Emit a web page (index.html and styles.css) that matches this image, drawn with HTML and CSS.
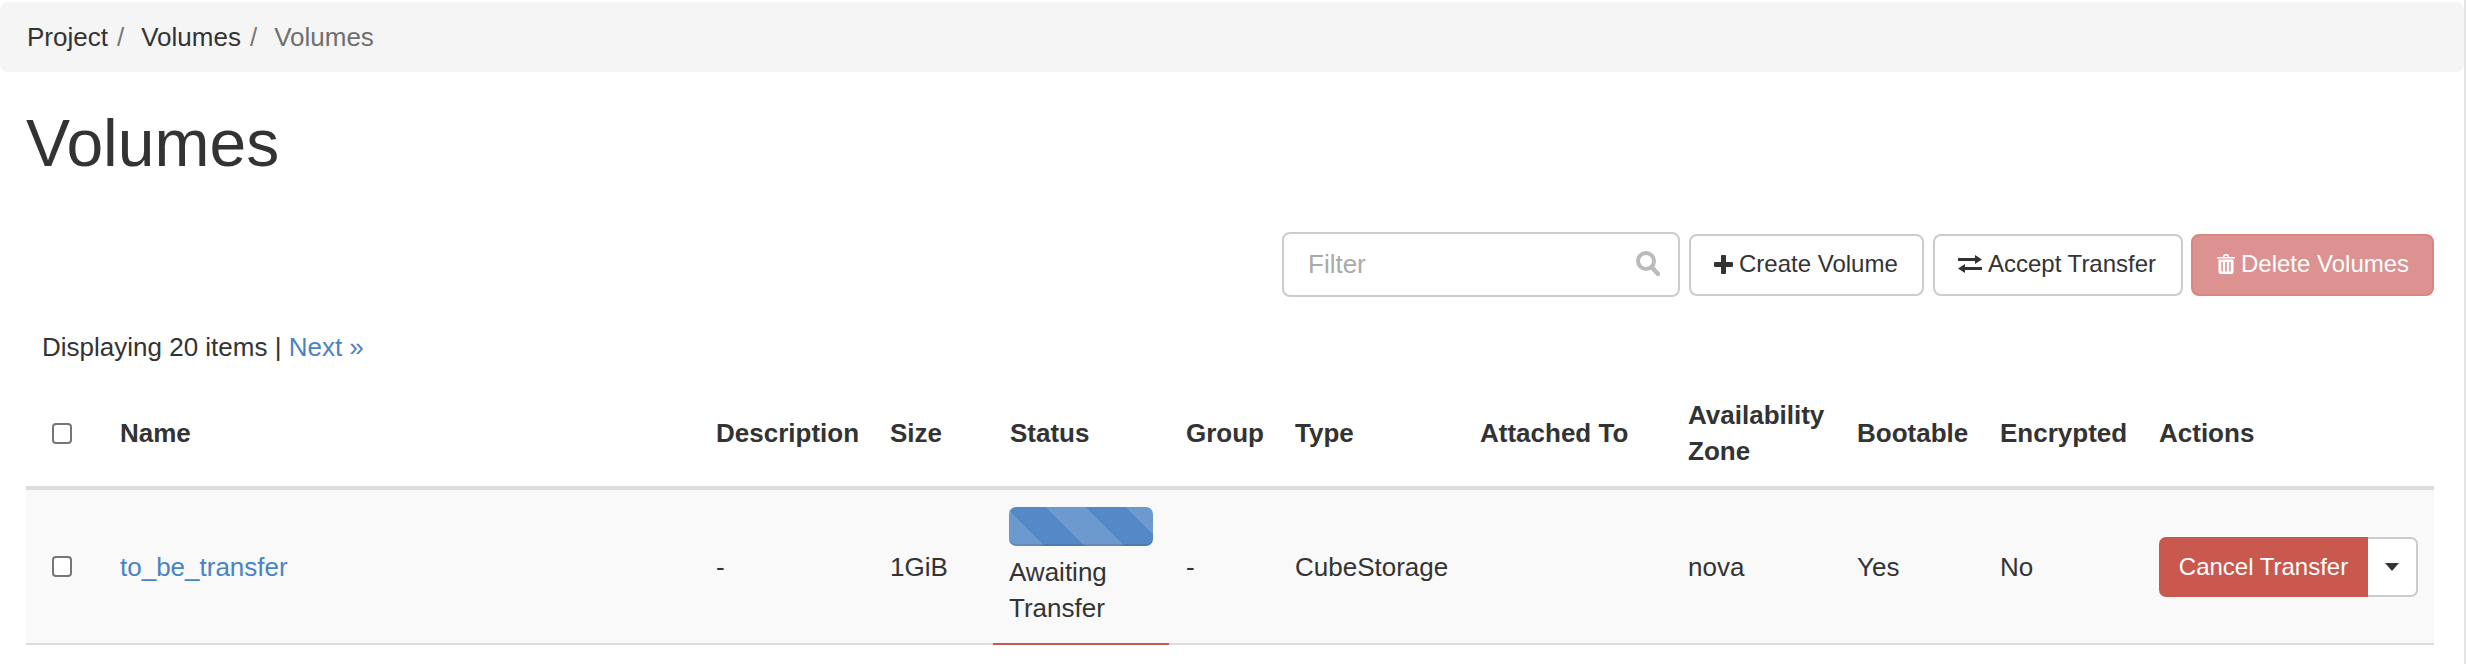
FILE: index.html
```html
<!DOCTYPE html>
<html lang="en">
<head>
<meta charset="utf-8">
<title>Volumes</title>
<link rel="stylesheet" href="styles.css">
</head>
<body>
<nav class="breadcrumb">
  <span class="crumb">Project</span><span class="sep">/</span>
  <span class="crumb">Volumes</span><span class="sep">/</span>
  <span class="crumb current">Volumes</span>
</nav>
<main class="content">
  <h1 class="page-title">Volumes</h1>
  <div class="toolbar">
    <div class="filter">
      <input class="filter-input" type="text" placeholder="Filter">
      <svg class="filter-icon" viewBox="0 0 24 25" aria-hidden="true"><circle cx="10" cy="10" r="8" fill="none" stroke="#bbb" stroke-width="4"/><path d="M16 16.500 22 23" stroke="#bbb" stroke-width="4.500" stroke-linecap="round"/></svg>
    </div>
    <button class="btn btn-create" type="button"><svg class="icon" viewBox="0 0 19 19" aria-hidden="true"><path d="M7 1a1 1 0 0 1 1-1h3a1 1 0 0 1 1 1v6h6a1 1 0 0 1 1 1v3a1 1 0 0 1-1 1h-6v6a1 1 0 0 1-1 1H8a1 1 0 0 1-1-1v-6H1a1 1 0 0 1-1-1V8a1 1 0 0 1 1-1h6z" fill="#333"/></svg>Create Volume</button>
    <button class="btn btn-accept" type="button"><svg class="icon icon-wide" viewBox="0 0 24 18" aria-hidden="true"><path d="M0 3h17V0l7 4.500-7 4.500V6H0zM24 12H7V9l-7 4.500L7 18v-3h17z" fill="#333"/></svg>Accept Transfer</button>
    <button class="btn btn-delete" type="button" disabled><svg class="icon icon-trash" viewBox="0 0 18 20" aria-hidden="true"><path d="M5.500 3 6.500.9C6.800.3 7.300 0 7.900 0h2.200c.6 0 1.100.3 1.400.9L12.500 3H18v1.600H0V3zm1.800 0h3.400l-.6-1.300H7.900zM1.500 5.500h15v12.300c0 1.300-.9 2.200-2 2.200H3.500c-1.100 0-2-.9-2-2.200zM4.300 8v9.500h1.500V8zm3.900 0v9.500h1.600V8zm4 0v9.500h1.500V8z" fill="#fff" fill-rule="evenodd"/></svg>Delete Volumes</button>
  </div>
  <div class="count">Displaying 20 items | <a class="link" href="#">Next »</a></div>
  <table class="grid">
    <colgroup>
      <col class="c-check"><col class="c-name"><col class="c-desc"><col class="c-size"><col class="c-status"><col class="c-group"><col class="c-type"><col class="c-att"><col class="c-az"><col class="c-boot"><col class="c-enc"><col class="c-act">
    </colgroup>
    <thead>
      <tr>
        <th class="check-cell"><span class="check"></span></th>
        <th>Name</th><th>Description</th><th>Size</th><th>Status</th><th>Group</th><th>Type</th><th>Attached To</th><th>Availability Zone</th><th>Bootable</th><th>Encrypted</th><th>Actions</th>
      </tr>
    </thead>
    <tbody>
      <tr>
        <td class="check-cell"><span class="check"></span></td>
        <td><a class="link" href="#">to_be_transfer</a></td>
        <td>-</td>
        <td>1GiB</td>
        <td class="status-cell"><div class="bar"></div>Awaiting Transfer</td>
        <td>-</td>
        <td>CubeStorage</td>
        <td></td>
        <td>nova</td>
        <td>Yes</td>
        <td>No</td>
        <td><div class="split"><button class="split-main" type="button">Cancel Transfer</button><button class="split-caret" type="button" aria-label="More"><span class="caret"></span></button></div></td>
      </tr>
    </tbody>
  </table>
</main>
</body>
</html>
```
FILE: styles.css
```css
* { box-sizing: border-box; }
html, body { margin: 0; background: #fff; }
body { min-height: 100vh; border-right: 2px solid #e4e4e4; font-family: "Liberation Sans", Arial, sans-serif; font-size: 26px; line-height: 36px; color: #333; }
.breadcrumb { margin-top: 2px; height: 70px; padding: 0 27px; display: flex; align-items: center; background: #f5f5f5; border-radius: 8px; }
.crumb { color: #333; }
.crumb.current { color: #6f6f6f; }
.sep { color: #777; padding: 0 17px 0 9px; }
.content { padding: 0 30px 0 26px; }
.page-title { margin: 31px 0 0; font-size: 66px; font-weight: 400; line-height: 80px; color: #333; }
.toolbar { display: flex; justify-content: flex-end; align-items: center; margin-top: 49px; height: 65px; }
.filter { position: relative; width: 398px; height: 65px; margin-right: 9px; }
.filter-input { width: 100%; height: 100%; padding: 0 24px; border: 2px solid #ccc; border-radius: 8px; font: inherit; color: #333; background: #fff; outline: none; }
.filter-input::placeholder { color: #aaa; opacity: 1; }
.filter-icon { position: absolute; right: 20px; top: 19px; width: 24px; height: 25px; }
.btn { height: 62px; padding: 0 0 1px 23px; border: 2px solid #ccc; border-radius: 8px; background: #fff; color: #333; font: inherit; font-size: 24px; white-space: nowrap; display: inline-flex; align-items: center; }
.btn-create { width: 235px; margin-right: 9px; }
.btn-accept { width: 250px; margin-right: 8px; }
.btn-delete { width: 243px; padding-left: 24px; background: #dc9290; border-color: #d98682; color: #fff; }
.icon { width: 19px; height: 19px; margin-right: 6px; flex: none; }
.icon-wide { width: 24px; height: 18px; }
.icon-trash { width: 18px; height: 20px; }
.count { margin-top: 32px; padding-left: 16px; height: 36px; color: #333; }
.link { color: #4a83c4; text-decoration: none; }
.grid { width: 2408px; table-layout: fixed; border-collapse: collapse; margin-top: 21px; }
.c-check { width: 77px; } .c-name { width: 596px; } .c-desc { width: 174px; } .c-size { width: 120px; }
.c-status { width: 176px; } .c-group { width: 109px; } .c-type { width: 185px; } .c-att { width: 208px; }
.c-az { width: 169px; } .c-boot { width: 143px; } .c-enc { width: 159px; } .c-act { width: 292px; }
th, td { padding: 14px 17px; text-align: left; vertical-align: middle; }
th { height: 87px; padding-top: 11px; padding-bottom: 17px; font-weight: 700; border-bottom: 4px solid #ddd; }
td { height: 156px; background: #f9f9f9; border-bottom: 2px solid #ddd; }
th.check-cell { padding: 0 0 6px 26px; }
td.check-cell { padding: 0 0 0 26px; }
.check { display: block; width: 20px; height: 21px; border: 2px solid #767676; border-radius: 4px; background: #fff; }
td.status-cell { padding: 14px 16px; border-bottom-color: #c9584f; }
.bar { width: 144px; height: 39px; margin-bottom: 8px; border-radius: 7px; background-color: #5488c6; background-image: linear-gradient(45deg, rgba(255,255,255,.15) 25%, transparent 25%, transparent 50%, rgba(255,255,255,.15) 50%, rgba(255,255,255,.15) 75%, transparent 75%); background-size: 80px 80px; background-position: 37px 0; box-shadow: inset 0 -2px 0 rgba(0,0,0,.1); }
.split { display: flex; width: 259px; height: 60px; }
.split-main { width: 209px; border: 0; border-radius: 7px 0 0 7px; background: #c9584f; color: #fff; font: inherit; font-size: 24px; padding: 0; white-space: nowrap; }
.split-caret { flex: 1; display: flex; align-items: center; justify-content: center; border: 2px solid #ccc; border-left: 0; border-radius: 0 7px 7px 0; background: #fff; padding: 0; }
.caret { width: 0; height: 0; border-left: 7px solid transparent; border-right: 7px solid transparent; border-top: 8px solid #333; }
```
